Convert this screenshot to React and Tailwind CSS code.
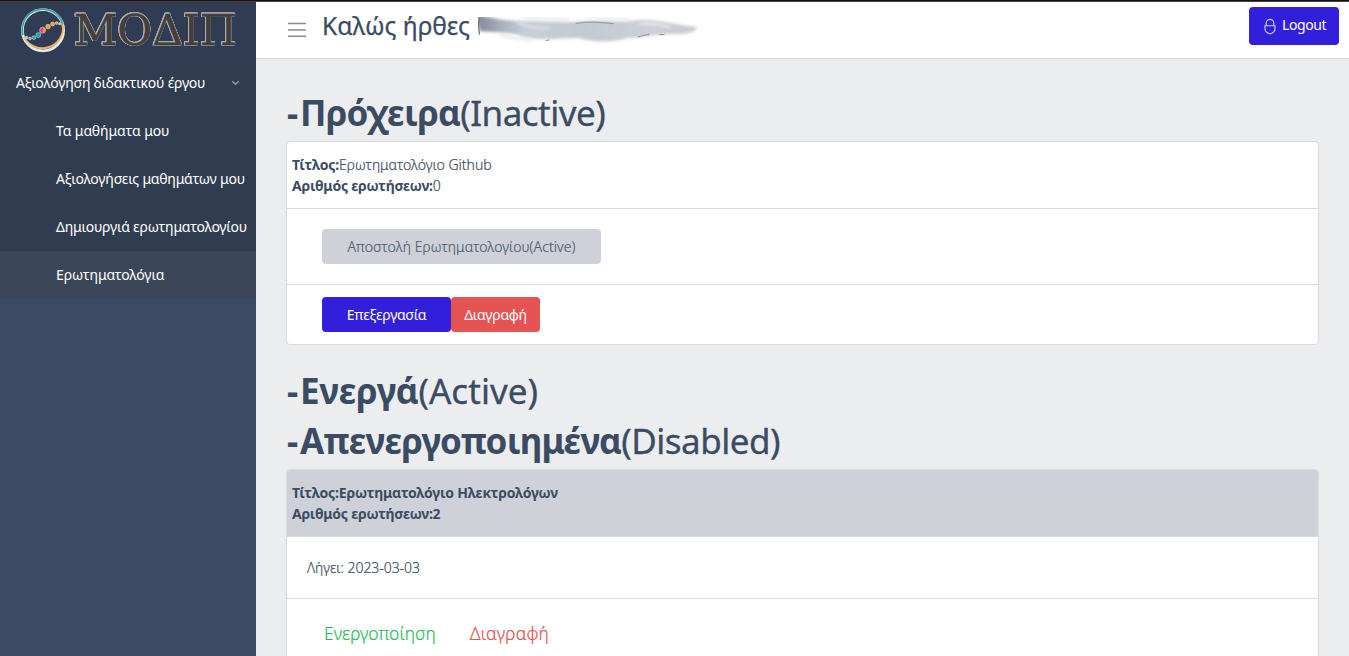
import React from "react";

const navItems = [
  { label: "Τα μαθήματα μου", track: "tracking-[-0.1px]" },
  { label: "Αξιολογήσεις μαθημάτων μου", track: "tracking-[-0.2px]" },
  { label: "Δημιουργιά ερωτηματολογίου", track: "tracking-[-0.22px]" },
  { label: "Ερωτηματολόγια", track: "tracking-[-0.14px]", active: true },
];

function Logo() {
  return (
    <svg width="220" height="56" viewBox="20 2 220 56" className="block overflow-visible">
      <g fill="none">
        <circle cx="43" cy="30.2" r="20.6" stroke="#e6e8e6" strokeWidth="2.8" />
        <path d="M22.9 35A20.6 20.6 0 0 1 62.8 24.5" stroke="#35a2ac" strokeWidth="1.7" />
        <path d="M62.8 24.5A20.6 20.6 0 0 1 24 36.8" stroke="#f3b565" strokeWidth="1.9" />
      </g>
      <g stroke="#e9eef0" strokeWidth="0.5">
        <circle cx="26.6" cy="37.6" r="1.4" fill="#8ccfd2" />
        <circle cx="30" cy="38.4" r="1.4" fill="#5dbcc1" />
        <circle cx="33.9" cy="37.6" r="1.9" fill="#1ea5ab" />
        <circle cx="38.4" cy="35" r="2.4" fill="#16a0a5" />
        <circle cx="42.6" cy="30.2" r="3" fill="#e4447c" />
        <path d="M43.2 27.4a2.9 2.9 0 0 1 0 5.6z" fill="#f7a62c" stroke="none" />
        <circle cx="48" cy="26.6" r="2.3" fill="#f79f1f" />
        <circle cx="52.6" cy="24" r="2" fill="#f79f1f" />
        <circle cx="56.6" cy="23.1" r="1.4" fill="#f79f1f" />
        <circle cx="59.7" cy="23.7" r="1.2" fill="#f3b565" />
      </g>
      <text
        x="74"
        y="45.4"
        textLength="163"
        lengthAdjust="spacingAndGlyphs"
        fontSize="42"
        className="font-['DejaVu_Serif',serif] [filter:drop-shadow(0.7px_0_0_#a9a9ac)_drop-shadow(-0.7px_0_0_#a9a9ac)_drop-shadow(0_0.7px_0_#a9a9ac)_drop-shadow(0_-0.7px_0_#a9a9ac)]"
        fill="#453f3c"
        stroke="#453f3c"
        strokeWidth="0.6"
      >
        ΜΟΔΙΠ
      </text>
    </svg>
  );
}

function Sidebar() {
  return (
    <aside className="flex w-64 shrink-0 flex-col bg-[#3c4b64] text-sm text-white">
      <div className="h-[57px] bg-[#303c54] pl-5">
        <Logo />
      </div>
      <nav className="bg-[#303c4f]">
        <div className="flex h-12 items-center justify-between pr-4 pl-4">
          <span className="tracking-[-0.22px] whitespace-nowrap">Αξιολόγηση διδακτικού έργου</span>
          <svg width="9" height="6" viewBox="0 0 9 6" fill="none" className="block">
            <path d="M1.2 1.2 4.5 4.3 7.8 1.2" stroke="#9299a5" strokeWidth="1.5" />
          </svg>
        </div>
        {navItems.map((item) => (
          <div
            key={item.label}
            className={`flex h-12 items-center pl-14 whitespace-nowrap ${item.track} ${item.active ? "bg-[#3b4658]" : ""}`}
          >
            {item.label}
          </div>
        ))}
      </nav>
    </aside>
  );
}

function RedactedName() {
  return (
    <svg width="226" height="40" viewBox="476 8 226 40" className="block">
      <defs>
        <filter id="soft" x="-10%" y="-60%" width="120%" height="220%">
          <feGaussianBlur stdDeviation="1.8" />
        </filter>
        <filter id="fine" x="-10%" y="-100%" width="120%" height="300%">
          <feGaussianBlur stdDeviation="0.6" />
        </filter>
        <linearGradient id="ink" x1="0" x2="1" y1="0" y2="0">
          <stop offset="0" stopColor="#7f8796" />
          <stop offset="0.1" stopColor="#a3abb8" />
          <stop offset="0.22" stopColor="#c8ced8" />
          <stop offset="0.5" stopColor="#c3c9d2" />
          <stop offset="0.8" stopColor="#cdd1d7" />
          <stop offset="1" stopColor="#c6cad1" />
        </linearGradient>
        <clipPath id="edge">
          <rect x="478" y="17" width="224" height="30" />
        </clipPath>
      </defs>
      <g clipPath="url(#edge)">
        <path
          d="M476 14C488 17 500 20 516 21C536 20 552 22 572 22C594 20 616 22 632 21C650 17 668 23 696 27C699 30 690 35 672 34C656 34 644 38 628 38C614 42 596 43 578 38C560 38 540 41 524 37C510 31 494 33 480 31Z"
          fill="url(#ink)"
          filter="url(#soft)"
        />
        <g fill="none" strokeLinecap="round" filter="url(#soft)">
          <path d="M522 17C534 19 552 18 568 19M586 17C604 19 618 18 630 20" stroke="#e3e6ea" strokeWidth="2" />
          <path d="M518 23C528 25 536 30 548 28" stroke="#e2e5ec" strokeWidth="2" />
          <path d="M500 35C510 38 520 39 530 40" stroke="#dfe2e7" strokeWidth="2" />
          <path d="M640 24C650 23 660 24 670 27" stroke="#e8eaed" strokeWidth="2" />
        </g>
      </g>
      <g fill="none" strokeLinecap="round" filter="url(#fine)">
        <path d="M576 23.5C588 21.6 602 21.8 613 23.6" stroke="#939cab" strokeWidth="1.2" />
        <path d="M546 40.5L549 40M638 37C642 35.5 645 35 649 34.5M660 34.5L664 34.5" stroke="#7f8797" strokeWidth="0.9" />
        <path d="M479.5 19C478.3 23 478.4 28 479.5 34" stroke="#75706f" strokeWidth="1.3" />
      </g>
    </svg>
  );
}

function Header() {
  return (
    <header className="flex h-[57px] items-start border-b border-[#d8dbe0] bg-white pr-2.5 pl-8">
      <svg width="18" height="16" viewBox="0 0 18 16" className="mt-5 block">
        <path d="M0 1.5h18M0 8h18M0 14.2h18" stroke="#8a8a95" strokeWidth="1.4" />
      </svg>
      <h3 className="ml-4 pt-[9px] text-[24.5px] leading-[30px] whitespace-nowrap text-[#3c4b64] [-webkit-text-stroke:0.25px]">
        Καλώς ήρθες
      </h3>
      <div className="ml-1.5 pt-1.5">
        <RedactedName />
      </div>
      <button className="mt-[5px] ml-auto flex h-[38px] w-[90px] items-center rounded bg-[#321fdb] pb-0.5 pl-[15px] text-sm text-white">
        <svg width="12" height="17" viewBox="0 0 12 17" fill="none" className="mt-[3px] block" stroke="#d6d2f8" strokeWidth="1.1">
          <path d="M1 7.8h10v2.9a5 5 0 0 1-10 0zM2.2 7.8V5.2a3.8 3.8 0 0 1 7.6 0v2.6" />
        </svg>
        <span className="ml-1.5 tracking-[-0.4px]">Logout</span>
      </button>
    </header>
  );
}

function Heading({ strong, rest, strongTrack, restTrack }) {
  return (
    <h1 className="mb-1.5 h-[42px] pt-px pl-px text-[35px] leading-[42px] whitespace-nowrap">
      <b className="font-bold tracking-[1.8px]">-</b>
      <b className={`font-bold ${strongTrack}`}>{strong}</b>
      <span className={`[-webkit-text-stroke:0.3px] ${restTrack}`}>{rest}</span>
    </h1>
  );
}

export default function App() {
  return (
    <div className="flex h-[656px] flex-col overflow-hidden bg-[#ebedef] font-['Noto_Sans','Open_Sans',sans-serif] text-[#3c4b64]">
      <div className="h-0.5 shrink-0 border-b border-[#453f40] bg-[#14100f]" />
      <div className="flex min-h-0 flex-1">
        <Sidebar />
        <div className="min-w-0 flex-1">
          <Header />
          <main className="pt-8 pr-[30px] pl-[30px] text-sm">
            <div className="pb-0.5">
              <Heading strong="Πρόχειρα" rest="(Inactive)" strongTrack="tracking-[-0.8px]" restTrack="tracking-[-0.5px]" />
            </div>
            <section className="mb-6 rounded border border-[#d8dbe0] bg-white">
              <div className="h-[67px] border-b border-[#d8dbe0] px-[5px] pt-3 leading-[21px] font-light">
                <p className="[-webkit-text-stroke:0.2px]">
                  <b className="font-bold tracking-[-0.15px] [-webkit-text-stroke:0px]">Τίτλος:</b>Ερωτηματολόγιο Github
                </p>
                <p className="[-webkit-text-stroke:0.2px]">
                  <b className="font-bold tracking-[-0.23px] [-webkit-text-stroke:0px]">Αριθμός ερωτήσεων:</b>0
                </p>
              </div>
              <div className="h-19 border-b border-[#d8dbe0] pt-5 pl-[35px]">
                <button className="flex h-[35px] w-[279px] items-center justify-center rounded bg-[#ced2d8] font-light tracking-[0.08px] whitespace-nowrap text-[#4f5d73] [-webkit-text-stroke:0.2px]">
                  Αποστολή Ερωτηματολογίου(Active)
                </button>
              </div>
              <div className="flex h-[59px] pt-3 pl-[35px] text-white">
                <button className="h-[35px] w-[129px] rounded bg-[#321fdb] tracking-[-0.27px]">Επεξεργασία</button>
                <button className="h-[35px] w-[89px] rounded bg-[#e55353] tracking-[-0.27px]">Διαγραφή</button>
              </div>
            </section>

            <div className="flex flex-col gap-0.5 pb-0.5">
              <Heading strong="Ενεργά" rest="(Active)" strongTrack="tracking-[-0.3px]" restTrack="tracking-[0.05px]" />
              <Heading
                strong="Απενεργοποιημένα"
                rest="(Disabled)"
                strongTrack="tracking-[-0.8px]"
                restTrack="tracking-[-0.5px]"
              />
            </div>
            <section className="rounded border border-[#d8dbe0] bg-white">
              <div className="h-[67px] rounded-t-[3px] border-b border-[#d8dbe0] bg-[#ced2d8] px-[5px] pt-3 leading-[21px] font-bold tracking-[-0.19px]">
                <p>Τίτλος:Ερωτηματολόγιο Ηλεκτρολόγων</p>
                <p className="tracking-[-0.24px]">Αριθμός ερωτήσεων:2</p>
              </div>
              <div className="h-[62px] border-b border-[#d8dbe0] pt-5 pl-5 leading-[21px] font-light tracking-[-0.05px] [-webkit-text-stroke:0.2px]">
                Λήγει: 2023-03-03
              </div>
              <div className="flex h-24 gap-[34px] pt-[21px] pl-[37px] text-[17.5px] leading-[26px] font-light [-webkit-text-stroke:0.2px]">
                <span className="text-[#2eb85c]">Ενεργοποίηση</span>
                <span className="tracking-[0.2px] text-[#e55353]">Διαγραφή</span>
              </div>
            </section>
          </main>
        </div>
      </div>
    </div>
  );
}
